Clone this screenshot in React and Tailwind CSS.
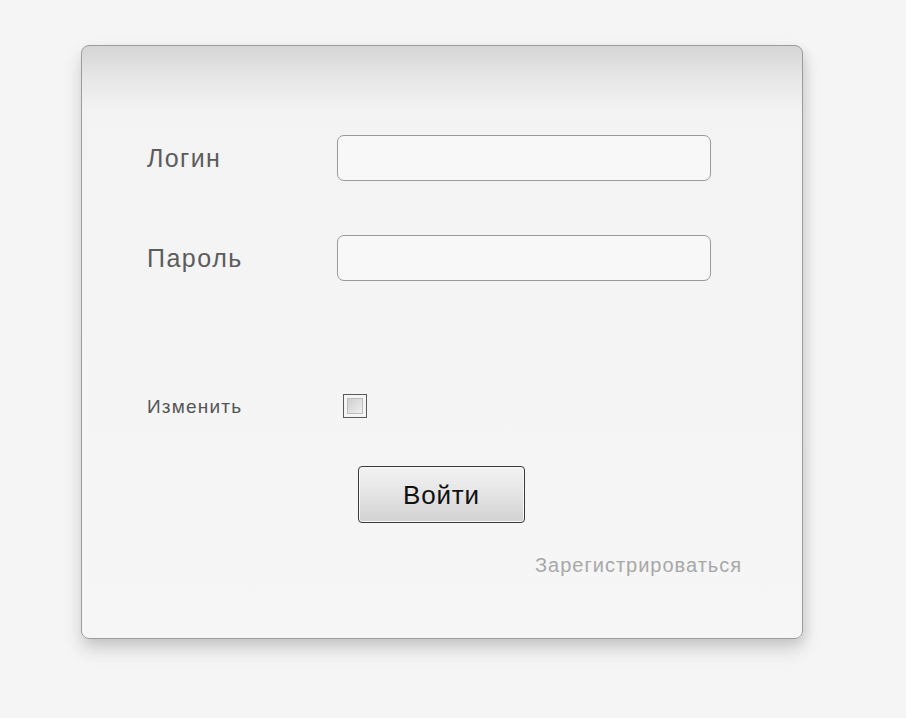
export default function App() {
  return (
    <div className="w-[906px] h-[718px] bg-[#f6f5f5] pt-[45px] pl-[81px]" style={{ fontFamily: '"Liberation Sans", Arial, sans-serif' }}>
      <div className="w-[722px] h-[594px] rounded-[8px] border border-[#9c9c9c] bg-[linear-gradient(to_bottom,#d5d5d5_0px,#e6e6e6_30px,#f3f3f3_65px,#f6f6f6_100%)] shadow-[0_10px_18px_rgba(0,0,0,0.16),4px_4px_10px_rgba(0,0,0,0.06)] pt-[89px] pl-[65px] relative">
        <div className="flex items-center h-[46px]">
          <span className="w-[190px] text-[25px] tracking-[1.4px] text-[#5c5c5c] leading-none">Логин</span>
          <input className="w-[374px] h-[46px] rounded-[7px] border border-[#9a9a9a] bg-[#f8f8f8] outline-none" />
        </div>
        <div className="flex items-center h-[46px] mt-[54px]">
          <span className="w-[190px] text-[25px] tracking-[1.5px] text-[#5c5c5c] leading-none">Пароль</span>
          <input type="password" className="w-[374px] h-[46px] rounded-[7px] border border-[#9a9a9a] bg-[#f8f8f8] outline-none" />
        </div>
        <div className="flex items-center h-[24px] mt-[113px]">
          <span className="w-[196px] text-[19px] tracking-[1.2px] text-[#555] leading-none">Изменить</span>
          <div className="w-[24px] h-[24px] border border-[#5a5a5a] bg-[#f4f4f4] p-[3px]">
            <div className="w-full h-full border border-[#bdbdbd] bg-[linear-gradient(135deg,#cfcfcf,#eeeeee)]"></div>
          </div>
        </div>
        <button className="mt-[48px] ml-[211px] w-[167px] h-[57px] rounded-[4px] border-[1.5px] border-[#3a3a3a] bg-[linear-gradient(to_bottom,#f2f2f2_0%,#e6e6e6_45%,#d2d2d2_100%)] shadow-[inset_0_0_0_1px_#f8f8f8] text-[26px] tracking-[0.8px] text-[#111] leading-none">
          Войти
        </button>
        <div className="mt-[32px] ml-[388px] text-[20px] tracking-[1px] text-[#a8a8a8] leading-none">Зарегистрироваться</div>
      </div>
    </div>
  );
}
